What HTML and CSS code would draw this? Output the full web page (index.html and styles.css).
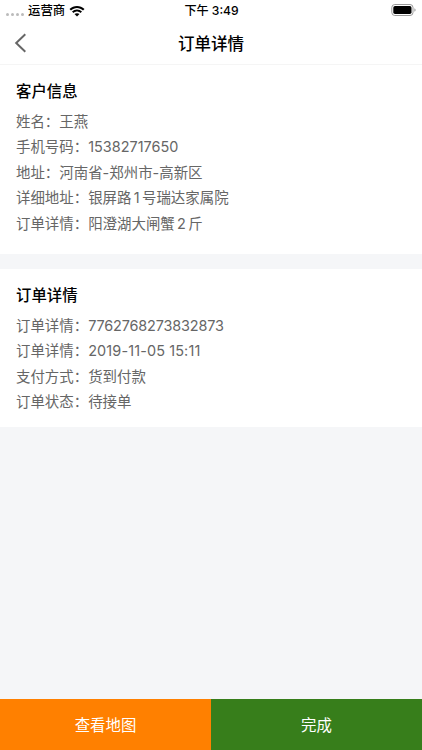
FILE: index.html
```html
<!DOCTYPE html>
<html lang="zh-CN">
<head>
  <meta charset="UTF-8" />
  <meta name="viewport" content="width=device-width, initial-scale=1.0" />
  <title>订单详情</title>
  <link rel="stylesheet" href="styles.css">
</head>
<body>
  <div class="status-bar">
    <div class="carrier">
      <span class="dots"><i></i><i></i><i></i><i></i></span>
      <span>运营商</span>
      <svg class="wifi" width="16" height="12" viewBox="0 0 16 12">
        <path d="M.5 4.1C4.6-.2 11.4-.2 15.5 4.1L14 5.6C10.7 2.2 5.3 2.2 2 5.6Z" />
        <path d="M3 6.6C5.8 3.8 10.2 3.8 13 6.6L11.5 8.1C9.5 6.1 6.5 6.1 4.5 8.1Z" />
        <path d="M5.5 9.1C6.9 7.8 9.1 7.8 10.5 9.1L8 11.6Z" />
      </svg>
    </div>
    <div class="time">下午 <span>3:49</span></div>
    <svg class="battery" width="26" height="12" viewBox="0 0 26 12">
      <rect x=".8" y=".5" width="21.2" height="11" rx="3" fill="none" stroke="#999" />
      <rect x="2.3" y="2" width="18.2" height="8" rx="1.7" />
      <path d="M23.4 4.2C25 4.8 25 7.2 23.4 7.8Z" fill="#999" />
    </svg>
  </div>

  <header class="navbar">
    <svg class="back" width="12" height="20" viewBox="0 0 12 20">
      <path d="M11.3 1.3L2.2 10L11.3 18.7" />
    </svg>
    <h1>订单详情</h1>
  </header>

  <main>
    <section class="card customer">
      <h2>客户信息</h2>
      <p>姓名：王燕</p>
      <p>手机号码：15382717650</p>
      <p>地址：河南省-郑州市-高新区</p>
      <p>详细地址：银屏路<span class="count">1</span>号瑞达家属院</p>
      <p>订单详情：阳澄湖大闸蟹<span class="count">2</span>斤</p>
    </section>

    <section class="card">
      <h2>订单详情</h2>
      <p>订单详情：<span class="order-no">7762768273832873</span></p>
      <p>订单详情：<span class="date">2019-11-05 15:11</span></p>
      <p>支付方式：货到付款</p>
      <p>订单状态：待接单</p>
    </section>
  </main>

  <footer class="actions">
    <button class="map">查看地图</button>
    <button class="done">完成</button>
  </footer>
</body>
</html>
```

FILE: styles.css
```css
* {
  box-sizing: border-box;
}
body {
  display: flex;
  flex-direction: column;
  height: 100vh;
  margin: 0;
  font-family: Inter, "Noto Sans CJK SC", sans-serif;
  background: #f5f6f8;
  color: #000;
}
.status-bar {
  display: grid;
  grid-template-columns: 1fr auto 1fr;
  align-items: center;
  height: 21px;
  padding: 0 5px 0 6px;
  background: #fff;
  font-size: 12.4px;
  line-height: 20px;
  font-weight: 500;
}
.carrier {
  display: flex;
  align-items: center;
}
.dots {
  display: flex;
  gap: 2px;
  margin: 7px 4px 0 0;
}
.dots i {
  width: 3px;
  height: 3px;
  border-radius: 50%;
  background: #bbb;
}
.wifi {
  margin-left: 4px;
}
.time {
  font-size: 12.1px;
}
.battery {
  justify-self: end;
  margin-bottom: 1px;
}
.navbar {
  display: flex;
  align-items: center;
  height: 44px;
  padding: 0 14px;
  background: #fff;
  border-bottom: 1px solid #f5f5f5;
}
.back {
  fill: none;
  stroke: #666;
  stroke-width: 2;
}
h1 {
  flex: 1;
  margin: 0 12px 0 0;
  font-size: 16.5px;
  font-weight: 500;
  text-align: center;
}
main {
  flex: 1;
}
.card {
  height: 158px;
  padding: 14px 16px 0;
  background: #fff;
}
.customer {
  height: 189px;
  margin-bottom: 15px;
}
h2 {
  margin: 0 0 3.5px;
  font-size: 15.4px;
  line-height: 26px;
  font-weight: 500;
}
p {
  margin: 0;
  font-size: 14.45px;
  line-height: 25.5px;
  color: #666;
}
.count {
  margin: 0 2.3px;
}
.order-no {
  letter-spacing: -0.15px;
}
.date {
  letter-spacing: 0.12px;
}
.actions {
  display: flex;
  height: 51px;
}
button {
  flex: 1;
  padding: 0 0 2px;
  border: none;
  color: #fff;
  font-family: inherit;
  font-size: 15.4px;
}
.map {
  background: #ff8000;
}
.done {
  background: #377e1b;
}
```
